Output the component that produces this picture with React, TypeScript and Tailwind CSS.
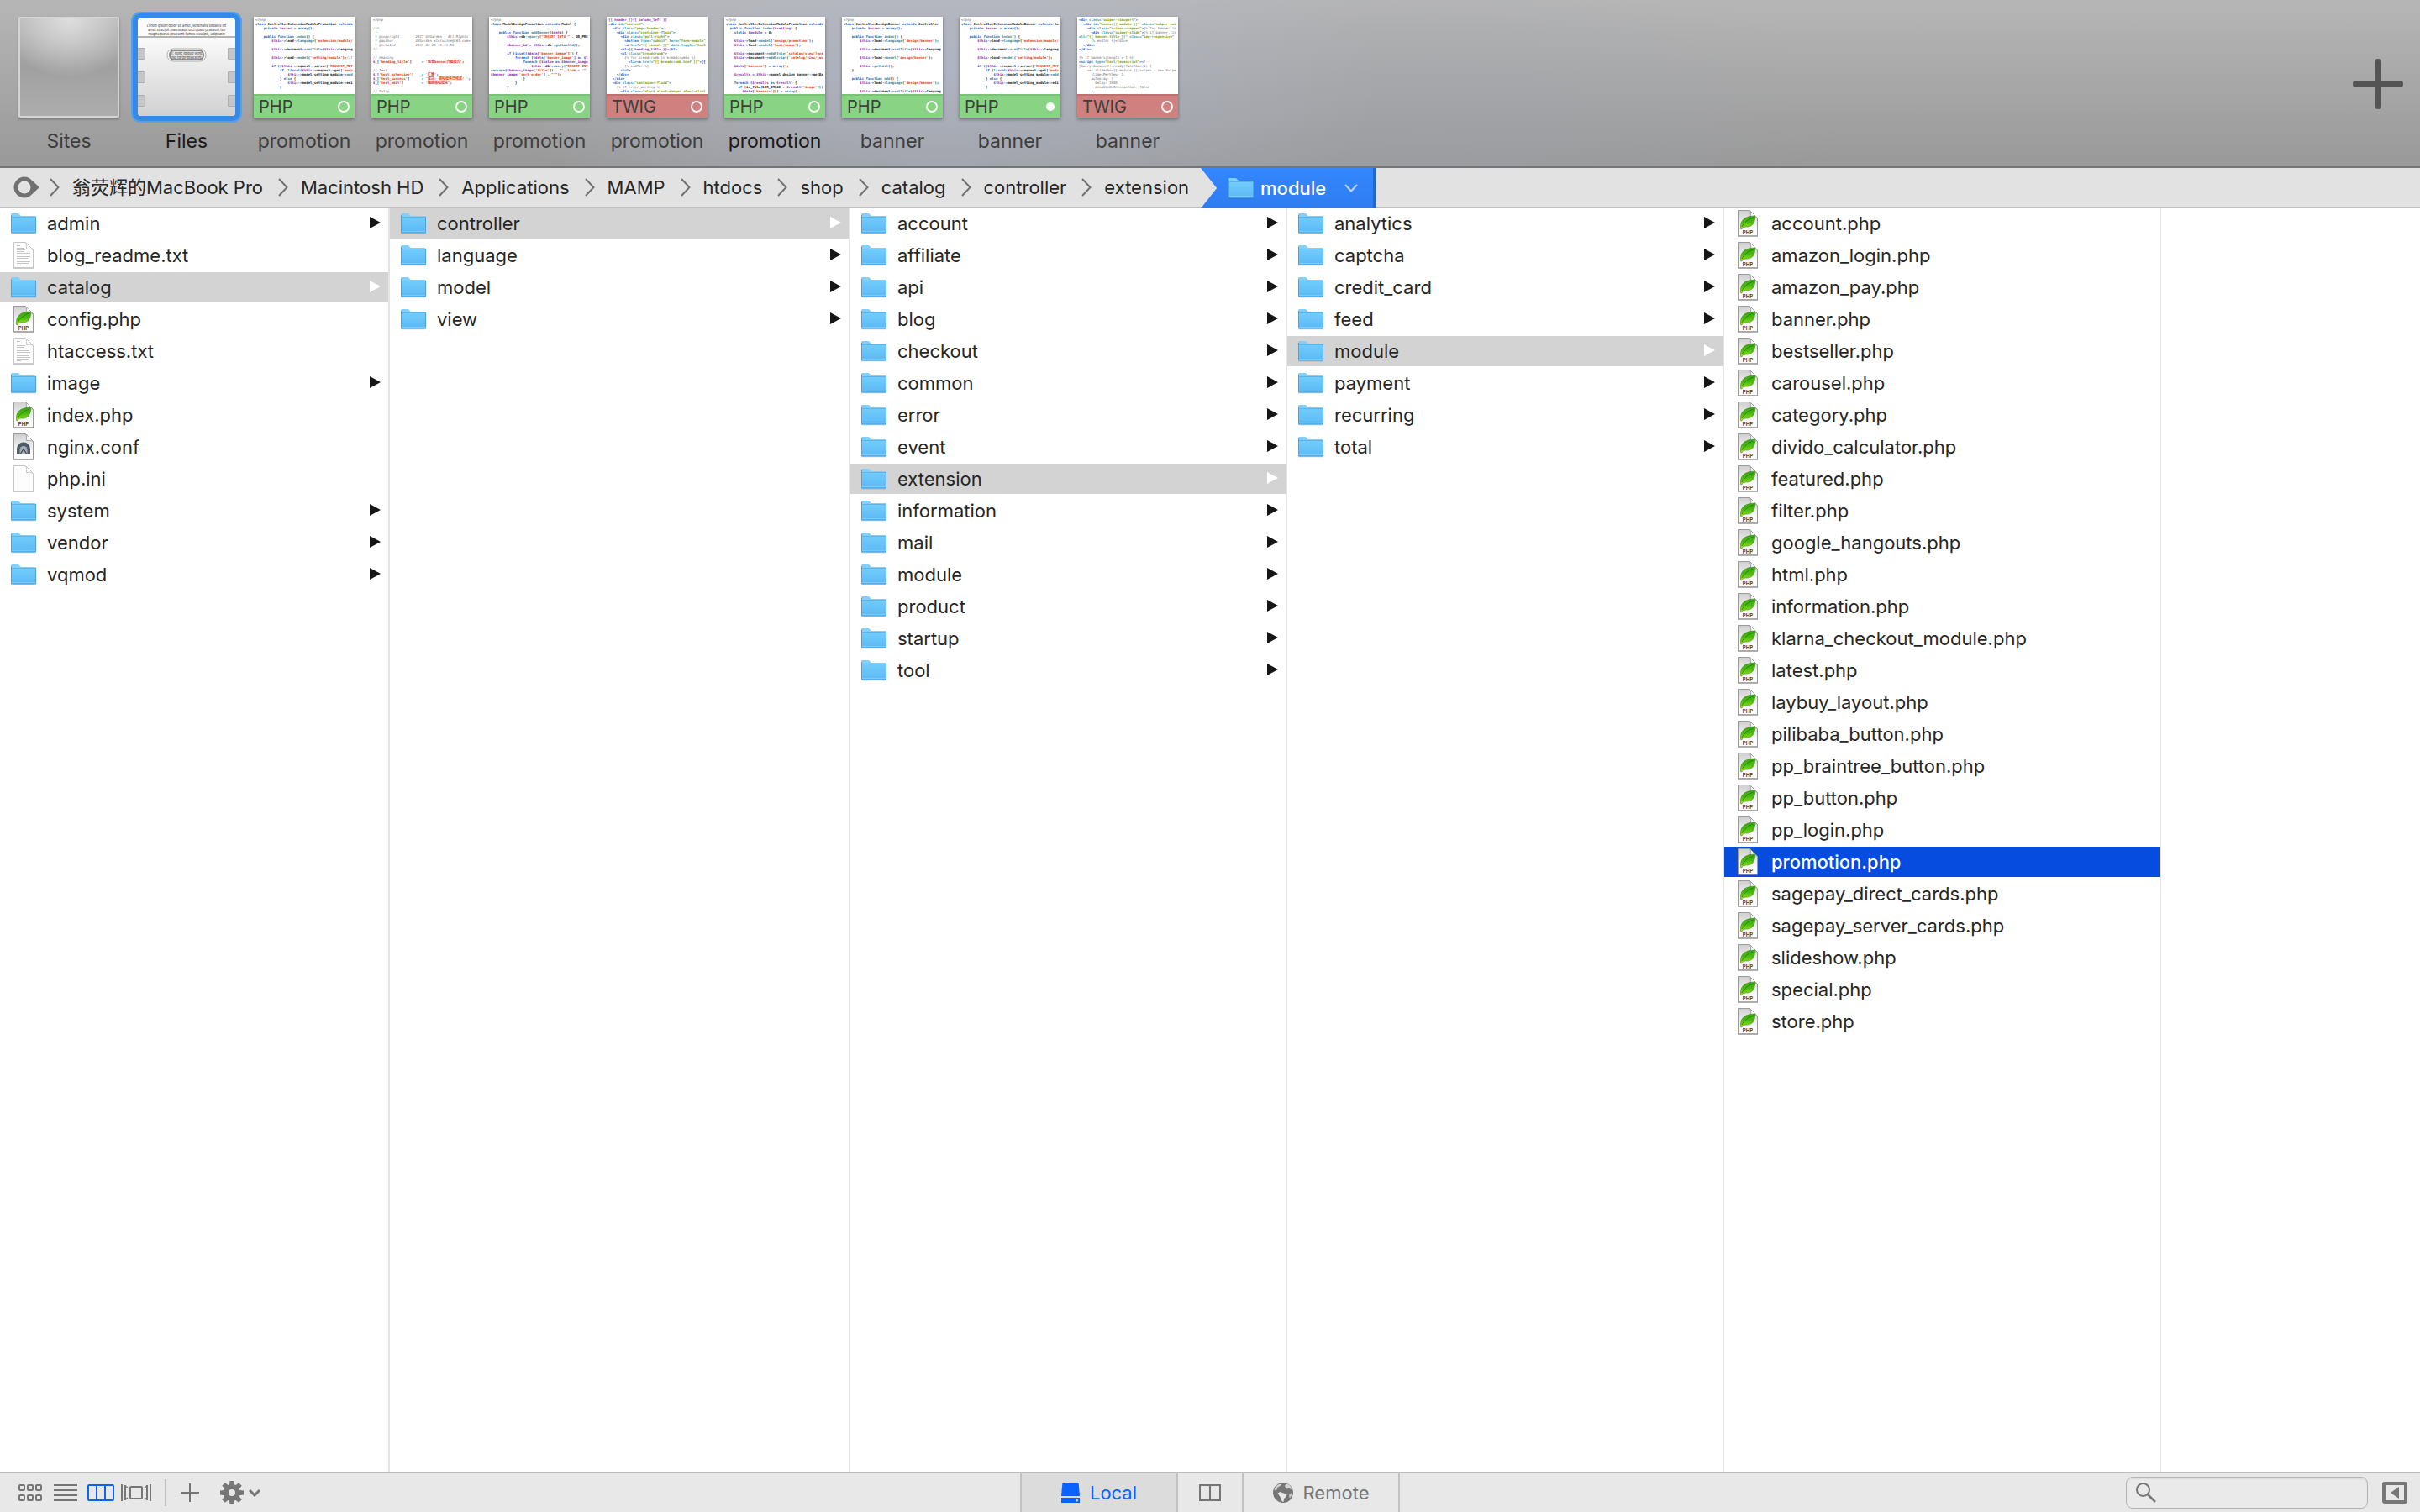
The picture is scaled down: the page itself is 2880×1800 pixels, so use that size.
import { useState, type ReactNode } from "react";
import clsx from "clsx";

type Lang = "php" | "twig";
type IconKind = "folder" | "php" | "text" | "conf" | "blank";

interface OpenTab {
    label: string;
    lang?: Lang;
    kind: "sites" | "files" | "code";
    isActive?: boolean;
    isModified?: boolean;
    code?: string;
}

interface FileColumn {
    width: string;
    selected?: string;
    isFocused?: boolean;
    items: string[];
}

const TABS: OpenTab[] = [
    { label: "Sites", kind: "sites" },
    { label: "Files", kind: "files", isActive: true },
    {
        label: "promotion",
        kind: "code",
        lang: "php",
        code: `<?php
class ControllerExtensionModulePromotion extends Controller {
    private $error = array();

    public function index() {
        $this->load->language('extension/module/promotion');

        $this->document->setTitle($this->language->get('title'));

        $this->load->model('setting/module');//test

        if (($this->request->server['REQUEST_METHOD'] == 'POST')
            if (!isset($this->request->get['module_id'])) {
                $this->model_setting_module->addModule('promotion')
            } else {
                $this->model_setting_module->editModule($this)
            }

        $this->session->data['success'] = $this->language`,
    },
    {
        label: "promotion",
        kind: "code",
        lang: "php",
        code: `<?php

/**
 *
 * @copyright        2017 UXGarden - All Rights
 * @author           UXGarden <tolozine@163.com>
 * @created          2019-01-26 11:11:56
*/

// Heading
$_['heading_title']     = '组合banner六图模式';

// Text
$_['text_extension']    = '扩展';
$_['text_success']      = '成功: 横幅模块已修改! ';
$_['text_edit']         = '编辑横幅模块';

// Entry`,
    },
    {
        label: "promotion",
        kind: "code",
        lang: "php",
        code: `<?php
class ModelDesignPromotion extends Model {

    public function addBanner($data) {
        $this->db->query("INSERT INTO " . DB_PREFIX . "banner");

        $banner_id = $this->db->getLastId();

        if (isset($data['banner_image'])) {
            foreach ($data['banner_image'] as $language_id) {
                foreach ($value as $banner_image) {
                    $this->db->query("INSERT INTO ")
>escape($banner_image['title']) . "', link = '" . $this
$banner_image['sort_order'] . "'");
                }
            }
        }

        return $banner_id;`,
    },
    {
        label: "promotion",
        kind: "code",
        lang: "twig",
        code: `{{ header }}{{ column_left }}
<div id="content">
  <div class="page-header">
    <div class="container-fluid">
      <div class="pull-right">
        <button type="submit" form="form-module" data-toggle>
        <a href="{{ cancel }}" data-toggle="tooltip">
      <h1>{{ heading_title }}</h1>
      <ul class="breadcrumb">
        {% for breadcrumb in breadcrumbs %}
          <li><a href="{{ breadcrumb.href }}">{{ breadcrumb }}
        {% endfor %}
      </ul>
    </div>
  </div>
  <div class="container-fluid">
    {% if error_warning %}
      <div class="alert alert-danger alert-dismissible">`,
    },
    {
        label: "promotion",
        kind: "code",
        lang: "php",
        isActive: true,
        code: `<?php
class ControllerExtensionModulePromotion extends Controller {
  public function index($setting) {
    static $module = 0;

    $this->load->model('design/promotion');
    $this->load->model('tool/image');

    $this->document->addStyle('catalog/view/javascript/jquery');
    $this->document->addScript('catalog/view/javascript/jquery');

    $data['banners'] = array();

    $results = $this->model_design_banner->getBanner($setting);

    foreach ($results as $result) {
      if (is_file(DIR_IMAGE . $result['image'])) {
        $data['banners'][] = array(`,
    },
    {
        label: "banner",
        kind: "code",
        lang: "php",
        code: `<?php
class ControllerDesignBanner extends Controller {
    private $error = array();

    public function index() {
        $this->load->language('design/banner');

        $this->document->setTitle($this->language->get('title'));

        $this->load->model('design/banner');

        $this->getList();
    }

    public function add() {
        $this->load->language('design/banner');

        $this->document->setTitle($this->language->get('title'));`,
    },
    {
        label: "banner",
        kind: "code",
        lang: "php",
        isModified: true,
        code: `<?php
class ControllerExtensionModuleBanner extends Controller {
    private $error = array();

    public function index() {
        $this->load->language('extension/module/banner');

        $this->document->setTitle($this->language->get('title'));

        $this->load->model('setting/module');

        if (($this->request->server['REQUEST_METHOD'] == 'POST')
            if (!isset($this->request->get['module_id'])) {
                $this->model_setting_module->addModule('banner')
            } else {
                $this->model_setting_module->editModule($this)
            }

        $this->session->data['success'] = $this->language`,
    },
    {
        label: "banner",
        kind: "code",
        lang: "twig",
        code: `<div class="swiper-viewport">
  <div id="banner{{ module }}" class="swiper-container">
    <div class="swiper-wrapper">{% for banner in banners %}
      <div class="swiper-slide">{% if banner.link %}
alt="{{ banner.title }}" class="img-responsive"
      {% endfor %}</div>
  </div>
</div>

{% if banners|length > 1 %}
<script type="text/javascript"><!--
jQuery(document).ready(function($) {
    var slideshow{{ module }}_swiper = new Swiper('#s
      slidesPerView: 1,
      autoplay: {
        delay: 3000,
        disableOnInteraction: false
      },`,
    },
];

const CRUMBS = ["翁荧辉的MacBook Pro", "Macintosh HD", "Applications", "MAMP", "htdocs", "shop", "catalog", "controller", "extension"];

// A trailing slash marks a folder
const COLUMNS: FileColumn[] = [
    {
        width: "w-[464px]",
        selected: "catalog/",
        items: ["admin/", "blog_readme.txt", "catalog/", "config.php", "htaccess.txt", "image/", "index.php", "nginx.conf", "php.ini", "system/", "vendor/", "vqmod/"],
    },
    {
        width: "w-[548px]",
        selected: "controller/",
        items: ["controller/", "language/", "model/", "view/"],
    },
    {
        width: "w-[520px]",
        selected: "extension/",
        items: ["account/", "affiliate/", "api/", "blog/", "checkout/", "common/", "error/", "event/", "extension/", "information/", "mail/", "module/", "product/", "startup/", "tool/"],
    },
    {
        width: "w-[520px]",
        selected: "module/",
        items: ["analytics/", "captcha/", "credit_card/", "feed/", "module/", "payment/", "recurring/", "total/"],
    },
    {
        width: "w-[520px]",
        selected: "promotion.php",
        isFocused: true,
        items: [
            "account.php",
            "amazon_login.php",
            "amazon_pay.php",
            "banner.php",
            "bestseller.php",
            "carousel.php",
            "category.php",
            "divido_calculator.php",
            "featured.php",
            "filter.php",
            "google_hangouts.php",
            "html.php",
            "information.php",
            "klarna_checkout_module.php",
            "latest.php",
            "laybuy_layout.php",
            "pilibaba_button.php",
            "pp_braintree_button.php",
            "pp_button.php",
            "pp_login.php",
            "promotion.php",
            "sagepay_direct_cards.php",
            "sagepay_server_cards.php",
            "slideshow.php",
            "special.php",
            "store.php",
        ],
    },
];

export default function App() {
    return (
        <div className="flex h-screen w-full flex-col overflow-hidden bg-white font-['Inter','Noto_Sans_CJK_SC',sans-serif] text-[22px] text-[#262626]">
            <SvgDefs />
            <TabStrip />
            <PathBar />
            <main className="flex min-h-0 flex-1 overflow-x-auto">
                {COLUMNS.map((column, i) => (
                    <Column key={i} column={column} />
                ))}
            </main>
            <StatusBar />
        </div>
    );
}

function TabStrip() {
    return (
        <header className="flex h-[200px] shrink-0 items-start justify-between border-b-2 border-[#757578] bg-[radial-gradient(ellipse_520px_260px_at_1120px_90px,rgba(178,186,208,0.6),transparent),radial-gradient(ellipse_500px_200px_at_1700px_140px,rgba(160,165,178,0.3),transparent),linear-gradient(#b6b6b6,#999999)] pt-5 pr-5 pl-3">
            <nav aria-label="Open documents" className="flex">
                {TABS.map((tab, i) => (
                    <button key={i} type="button" className="flex w-[140px] flex-col items-center gap-[14px]">
                        <TabThumbnail tab={tab} />
                        <span className={clsx("text-[23px] leading-7", tab.isActive ? "text-[#1a1a1a]" : "text-[#3e3e3e]")}>{tab.label}</span>
                    </button>
                ))}
            </nav>
            <button type="button" aria-label="New tab" className="mt-[50px]">
                <svg width="60" height="60" viewBox="0 0 60 60" stroke="#545454" strokeWidth="8" strokeLinecap="round">
                    <path d="M30 4v52M4 30h52" />
                </svg>
            </button>
        </header>
    );
}

function TabThumbnail({ tab }: { tab: OpenTab }) {
    if (tab.kind === "sites") {
        return (
            <span className="block size-[120px] rounded-xs border-2 border-[#d4d4d4] bg-[radial-gradient(ellipse_80px_70px_at_50%_0%,#dedede,transparent),linear-gradient(#b4b4b4,#a0a0a0_50%,#adadad)] shadow-[0_2px_3px_rgba(0,0,0,0.3)]" />
        );
    }

    if (tab.kind === "files") {
        return (
            <span className="m-[2px] block size-[116px] rounded-sm bg-white shadow-[0_0_0_6px_#3589e8,0_0_0_8px_#5a9fe4]">
                <FilesPreview />
            </span>
        );
    }

    return (
        <span className="flex size-[120px] flex-col overflow-hidden bg-white text-left shadow-[0_2px_4px_rgba(0,0,0,0.4)]">
            <span className="block h-[92px] overflow-hidden pt-px pl-[2px] font-['DejaVu_Sans_Mono','Noto_Sans_CJK_SC',monospace] text-[4px] leading-[5px] font-bold whitespace-pre text-[#222222]">
                {highlight(tab.code ?? "", tab.lang ?? "php")}
            </span>
            <span
                className={clsx(
                    "flex h-7 items-center justify-between border-t-2 px-[6px] text-[20px] leading-6 text-[#3b423b]",
                    tab.lang === "twig" ? "border-[#c17070] bg-[#d18080]" : "border-[#79c376] bg-[#88d484]",
                )}
            >
                {tab.lang?.toUpperCase()}
                {tab.isModified ? <span className="mr-px size-[10px] rounded-full bg-white" /> : <span className="size-[14px] rounded-full border-2 border-white/90" />}
            </span>
        </span>
    );
}

// Characters that fit across one thumbnail
const PREVIEW_COLUMNS = 48;

const PHP_TOKENS =
    /(?<comment>\/\*\*[\s\S]*?\*\/|\/\/.*|<\?php)|(?<string>'[^'\n]*'?|"[^"\n]*"?)|(?<variable>\$\w+)|(?<keyword>\b(?:class|extends|private|public|function|static|if|else|foreach|as|return|isset|array)\b|->|=>|=)|(?<method>\b(?:index|add|language|model|setTitle|addStyle|addScript|addBanner|query|getLastId|getList|getBanner|addModule|editModule|escape)\b)/g;

const TWIG_TOKENS =
    /(?<variable>\{\{.*?\}\})|(?<comment>\{%.*|<!--[\s\S]*)|(?<attribute>\b[\w-]+=)|(?<value>"[^"\n]*"?)|(?<keyword><\/?\w+|>)/g;

const TOKEN_COLORS: Record<string, string> = {
    comment: "font-normal text-[#707070]",
    string: "text-[#dd3a10]",
    variable: "text-[#8a2fb0]",
    keyword: "text-[#1b5fc4]",
    method: "text-[#3f8090]",
    attribute: "text-[#3a9ab0]",
    value: "text-[#7d9c10]",
};

function highlight(source: string, lang: Lang): ReactNode[] {
    const code = source
        .split("\n")
        .map((line) => line.slice(0, PREVIEW_COLUMNS).trimEnd())
        .join("\n");
    const nodes: ReactNode[] = [];
    let last = 0;

    for (const match of code.matchAll(lang === "php" ? PHP_TOKENS : TWIG_TOKENS)) {
        const type = Object.entries(match.groups ?? {}).find(([, value]) => value !== undefined)?.[0] ?? "";
        nodes.push(code.slice(last, match.index));
        nodes.push(
            <span key={match.index} className={clsx(TOKEN_COLORS[type], lang === "php" && type === "comment" && "italic")}>
                {match[0]}
            </span>,
        );
        last = match.index + match[0].length;
    }

    nodes.push(code.slice(last));
    return nodes;
}

function FilesPreview() {
    return (
        <svg width="116" height="116" viewBox="2 2 116 116">
            <rect x="2" y="2" width="116" height="116" rx="4" fill="url(#filesBody)" />
            <path d="M2 6a4 4 0 0 1 4-4h108a4 4 0 0 1 4 4v17H2z" fill="#fbfbfb" />
            <path d="M2 24h116" stroke="#b3b3b3" strokeWidth="2" />
            <g fontSize="4" fontWeight="500" fill="#555555" textAnchor="middle">
                <text x="60" y="12">Lorem ipsum dolor sit amet, venenatis sodales int</text>
                <text x="60" y="17">amet suscipit malesuada orci quam praesent tell</text>
                <text x="60" y="22">magna purus praesent fames suscipit, adipiscin</text>
            </g>
            <g fill="#c4c5c7" stroke="#aeafb1">
                <path d="M2 37.500h8.500v13H2M2 65.500h8.500v13H2M2 93.500h8.500v13H2" />
                <path d="M118 37.500h-8.500v13h8.500M118 65.500h-8.500v13h8.500M118 93.500h-8.500v13h8.500" />
            </g>
            <rect x="37" y="38" width="46" height="15" rx="7" fill="#f6f6f6" stroke="#b0b0b0" />
            <rect x="40" y="40" width="40" height="11" rx="5" fill="#e4e4e4" stroke="#8a8a8a" strokeWidth="2" />
            <g fontSize="4" fontWeight="500" fill="#555555" textAnchor="middle">
                <text x="60" y="45">it, nunc id quo vene</text>
                <text x="60" y="50">nel tortor praesent</text>
            </g>
        </svg>
    );
}

function PathBar() {
    return (
        <nav aria-label="Path" className="flex h-12 shrink-0 border-b-2 border-[#bfbfbf] bg-[#e2e2e2] pl-4">
            <button type="button" aria-label="Root" className="flex items-center">
                <svg width="31" height="26" viewBox="0 0 31 26">
                    <path d="M13 .5c3.500 0 6.300 1.200 8.800 3.900L31 13l-9.200 8.600C19.300 24.300 16.500 25.500 13 25.500a12.500 12.500 0 0 1 0-25zM13 5.500a7.500 7.500 0 1 0 0 15 7.500 7.500 0 0 0 0-15z" fill="#717171" fillRule="evenodd" />
                </svg>
            </button>
            <ol className="flex">
                {CRUMBS.map((crumb, i) => (
                    <li key={crumb} className="flex items-center">
                        <svg className={clsx("mr-[15px]", i === 0 ? "ml-3" : "ml-[18px]")} width="12" height="22" viewBox="0 0 12 22" fill="none" stroke="#707070" strokeWidth="2">
                            <path d="M1 1l9.500 10L1 21" />
                        </svg>
                        <a href="#" className="leading-7 whitespace-nowrap">
                            {crumb}
                        </a>
                    </li>
                ))}
            </ol>
            <button
                type="button"
                aria-haspopup="menu"
                className="-mb-[2px] ml-[14px] flex items-center border-r-[3px] border-[#1f66d8] bg-linear-to-b from-[#3387ff] to-[#2f7cf0] pr-[18px] pl-[33px] font-medium text-white [clip-path:polygon(0_0,100%_0,100%_100%,0_100%,19px_50%)]"
            >
                <FolderIcon />
                <span className="mr-[22px] ml-2">module</span>
                <svg width="16" height="10" viewBox="0 0 16 10" fill="none" stroke="#b9d5ff" strokeWidth="2">
                    <path d="M1 1l7 7.500L15 1" />
                </svg>
            </button>
        </nav>
    );
}

function Column({ column }: { column: FileColumn }) {
    const [selected, setSelected] = useState(column.selected);

    return (
        <ul className={clsx("shrink-0 overflow-y-auto border-r-2 border-[#e4e4e4]", column.width)}>
            {column.items.map((item) => {
                const isFolder = item.endsWith("/");
                const isSelected = item === selected;

                return (
                    <li key={item} className="pb-[2px]">
                        <button
                            type="button"
                            onClick={() => setSelected(item)}
                            className={clsx(
                                "flex h-9 w-full items-center gap-3 pr-[9px] pl-3 text-left leading-9",
                                isSelected && (column.isFocused ? "bg-[#054cdf] font-medium text-white" : "bg-[#d3d3d3]"),
                            )}
                        >
                            <span className="flex w-8 justify-center">
                                <FileIcon kind={iconFor(item)} />
                            </span>
                            <span className="flex-1">{item.replace("/", "")}</span>
                            {isFolder && (
                                <svg className="mb-[3px]" width="13" height="14" viewBox="0 0 13 14">
                                    <path d="M0 0l13 7L0 14z" fill={isSelected ? "#ffffff" : "#161616"} />
                                </svg>
                            )}
                        </button>
                    </li>
                );
            })}
        </ul>
    );
}

function iconFor(name: string): IconKind {
    if (name.endsWith("/")) return "folder";
    if (name.endsWith(".php")) return "php";
    if (name.endsWith(".txt")) return "text";
    if (name.endsWith(".conf")) return "conf";
    return "blank";
}

// Gradients shared by all icons, declared once for the page
function SvgDefs() {
    return (
        <svg className="absolute size-0" aria-hidden="true">
            <defs>
                <linearGradient id="folderFront" x1="0" y1="0" x2="0" y2="1">
                    <stop offset="0" stopColor="#72ccfb" />
                    <stop offset="1" stopColor="#5bb8f6" />
                </linearGradient>
                <linearGradient id="page" x1="0" y1="0" x2="0" y2="1">
                    <stop offset="0" stopColor="#cfcfcf" />
                    <stop offset="0.7" stopColor="#fbfbfb" />
                </linearGradient>
                <linearGradient id="leaf" x1="0" y1="0" x2="0" y2="1">
                    <stop offset="0" stopColor="#3aa314" />
                    <stop offset="0.5" stopColor="#4cba10" />
                    <stop offset="1" stopColor="#a5e81c" />
                </linearGradient>
                <linearGradient id="filesBody" x1="0" y1="0" x2="0" y2="1">
                    <stop offset="0.2" stopColor="#fafafa" />
                    <stop offset="1" stopColor="#d0d0d2" />
                </linearGradient>
            </defs>
        </svg>
    );
}

function FolderIcon() {
    return (
        <svg className="shrink-0" width="30" height="26" viewBox="0 0 30 26">
            <path d="M0 24.500h30v1H0z" fill="#000000" opacity="0.12" />
            <path d="M0 2.500Q0 1 1.500 1h6.700q1 0 1.600.8l1.200 1.400q.5.800 1.500.8h16q1.500 0 1.500 1.500V10H0z" fill="#80d0fb" />
            <path d="M0 5.500h30V23q0 1.500-1.500 1.500h-27Q0 24.500 0 23z" fill="url(#folderFront)" />
            <path d="M.5 5.500h29" stroke="#5cb4e8" />
            <path d="M.5 22.500h29" stroke="#7dcbfa" />
            <path d="M.5 24h29M.5 3v21M29.500 5v19" stroke="#4fa2da" />
        </svg>
    );
}

function FileIcon({ kind }: { kind: IconKind }) {
    if (kind === "folder") return <FolderIcon />;

    const isDark = kind === "php" || kind === "conf";

    return (
        <svg className="shrink-0" width="24" height="32" viewBox="0 0 24 32">
            <path d="M.5 .5h14l9 9v21.500H.5z" fill={isDark ? "url(#page)" : "#fdfdfd"} stroke={isDark ? "#9b9b9b" : "#c6c6c6"} />
            <path d="M0 31h24" stroke={isDark ? "#8d8d8d" : "#b4b4b4"} />
            <path d="M14.500 .5q2 3 1 8 5-1 8 1z" fill="#ffffff" stroke={isDark ? "#a5a5a5" : "#c6c6c6"} />
            {kind === "php" && (
                <>
                    <path d="M3.500 22.500C3 13 6.500 7.500 20.500 7c.8 8-3.500 14-11 13-2.500 0-4 1-4.500 2.800z" fill="url(#leaf)" stroke="#3b8a1a" strokeWidth="0.6" />
                    <path d="M5 20c2.500-5 7-8.500 13.500-11" fill="none" stroke="#1f7a08" strokeWidth="0.8" />
                    <text x="12" y="29" textAnchor="middle" fontSize="6" fontWeight="700" fill="#444444">
                        PHP
                    </text>
                </>
            )}
            {kind === "text" && (
                <path
                    d="M4 4.500h4M4 7.500h9M4 9.500h10M4 11.500h9M4 13.500h16M4 15.500h15M4 17.500h16M4 19.500h13M4 21.500h15M4 23.500h16M4 25.500h14M4 27.500h5"
                    stroke="#c4c4c4"
                    strokeWidth="1"
                />
            )}
            {kind === "conf" && (
                <>
                    <path d="M4 24v-5.500a8 8 0 0 1 16 0V24z" fill="#4c5a69" />
                    <path d="M7.500 24v-4.500a4.500 4.500 0 0 1 9 0V24z" fill="#a6aeb6" />
                    <path d="M8.500 24l3.500-5.500 3.500 5.500" fill="none" stroke="#39434e" strokeWidth="1.200" />
                </>
            )}
        </svg>
    );
}

function StatusBar() {
    return (
        <footer className="grid h-12 shrink-0 grid-cols-[1fr_auto_1fr] border-t-2 border-[#bcbcbc] bg-[#e8e8e8] text-[#767676]">
            <div className="flex items-center pl-[22px]">
                <button type="button" aria-label="Icon view">
                    <svg width="28" height="20" viewBox="0 0 28 20" fill="none" stroke="currentColor" strokeWidth="2">
                        {[1, 11, 21].map((x) => (
                            <g key={x}>
                                <rect x={x} y="1" width="6" height="6" rx="1" />
                                <rect x={x} y="13" width="6" height="6" rx="1" />
                            </g>
                        ))}
                    </svg>
                </button>
                <button type="button" aria-label="List view" className="ml-[14px]">
                    <svg width="28" height="20" viewBox="0 0 28 20" stroke="currentColor" strokeWidth="2">
                        <path d="M0 1h28M0 7h28M0 13h28M0 19h28" />
                    </svg>
                </button>
                <button type="button" aria-label="Column view" aria-pressed="true" className="ml-3 text-[#0a63ff]">
                    <svg width="32" height="20" viewBox="0 0 32 20" fill="none" stroke="currentColor" strokeWidth="2">
                        <rect x="1" y="1" width="30" height="18" rx="1" />
                        <path d="M11 1v18M21 1v18" />
                    </svg>
                </button>
                <button type="button" aria-label="Cover flow view" className="ml-2">
                    <svg width="36" height="20" viewBox="0 0 36 20" fill="none" stroke="currentColor" strokeWidth="2">
                        <path d="M1 0v20M35 0v20M5 1v18M31 1v18" />
                        <path d="M5 2l3 2M5 18l3-2M31 2l-3 2M31 18l-3-2" strokeWidth="1.500" />
                        <rect x="11" y="3" width="14" height="14" rx="1" />
                    </svg>
                </button>
                <span className="ml-4 h-8 w-[2px] bg-[#bebebe]" />
                <button type="button" aria-label="Add" className="ml-[17px]">
                    <svg width="22" height="22" viewBox="0 0 22 22" stroke="currentColor" strokeWidth="2">
                        <path d="M11 0v22M0 11h22" />
                    </svg>
                </button>
                <button type="button" aria-label="Actions" className="ml-[25px] flex items-center gap-[6px]">
                    <svg width="28" height="28" viewBox="-14 -14 28 28" fill="currentColor">
                        {[0, 45, 90, 135].map((angle) => (
                            <path key={angle} d="M-2.500-14h5l.8 6v16l-.8 6h-5l-.8-6v-16z" transform={`rotate(${angle})`} />
                        ))}
                        <circle r="10" />
                        <circle r="4" fill="#e8e8e8" />
                    </svg>
                    <svg width="14" height="9" viewBox="0 0 14 9" fill="none" stroke="currentColor" strokeWidth="3">
                        <path d="M1 1l6 6 6-6" />
                    </svg>
                </button>
            </div>

            <div className="flex border-x-2 border-[#c2c2c2]">
                <button type="button" aria-pressed="true" className="flex w-[184px] items-center justify-center gap-3 bg-[#dcdcdc] text-[#0a63ff]">
                    <svg width="22" height="24" viewBox="0 0 22 24" fill="currentColor">
                        <path d="M3 0h16q1.500 0 1.700 1.500L22 16H0L1.300 1.500Q1.500 0 3 0z" />
                        <path d="M0 18h22v6H0z" />
                        <circle cx="18.500" cy="21" r="1.500" fill="#dcdcdc" />
                    </svg>
                    Local
                </button>
                <button type="button" aria-label="Split view" className="flex w-20 items-center justify-center border-x-2 border-[#c2c2c2]">
                    <svg width="26" height="20" viewBox="0 0 26 20" fill="none" stroke="currentColor" strokeWidth="2">
                        <path d="M1 1h24v18H1zM13 1v18" />
                    </svg>
                </button>
                <button type="button" className="flex w-[184px] items-center justify-center gap-3">
                    <svg width="24" height="24" viewBox="0 0 24 24">
                        <circle cx="12" cy="12" r="12" fill="currentColor" />
                        <path d="M5.500 12.500l3-1.500 4 1.500 4 1.500-1 3-2.500 2-.5 4c-2.500-1-3-2-3-4.500l-2-3z" fill="#e8e8e8" />
                        <path d="M14 3l3-1.500c3 1.300 4.500 3.500 5.300 6l-1.300.5-2-1.500-2 1-2-1z" fill="#e8e8e8" opacity="0.85" />
                        <path d="M1.500 9c1-4 3-6 6-7.200l3 .2-2 2-3 1.500-1 3z" fill="#e8e8e8" opacity="0.8" />
                        <path d="M19 14l3.500-2c0 3-1 5-3 6.500z" fill="#e8e8e8" opacity="0.7" />
                    </svg>
                    Remote
                </button>
            </div>

            <div className="flex items-center justify-end gap-[17px] pr-[15px]">
                <label className="flex h-[38px] w-[288px] items-center rounded-lg border border-[#b5b5b5] bg-[#eaeaea] pl-[11px] shadow-[inset_0_2px_2px_rgba(0,0,0,0.06)]">
                    <svg width="24" height="24" viewBox="0 0 24 24" fill="none" stroke="currentColor" strokeWidth="2">
                        <circle cx="8.500" cy="8.500" r="7.500" />
                        <path d="M14 14l9 9" strokeWidth="2.500" />
                    </svg>
                    <input type="search" aria-label="Search" className="ml-2 min-w-0 flex-1 bg-transparent outline-none" />
                </label>
                <button type="button" aria-label="Toggle sidebar">
                    <svg width="30" height="26" viewBox="0 0 30 26">
                        <rect x="2" y="2" width="26" height="22" rx="1" fill="none" stroke="currentColor" strokeWidth="4" />
                        <path d="M20 6v14l-10-7z" fill="currentColor" />
                    </svg>
                </button>
            </div>
        </footer>
    );
}
